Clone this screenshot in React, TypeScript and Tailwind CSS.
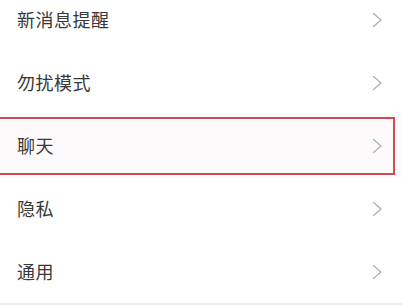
const ITEMS = ['新消息提醒', '勿扰模式', '聊天', '隐私', '通用']

function Chevron() {
  return (
    <svg width="11" height="16" viewBox="0 0 11 16" fill="none" className="text-[#b0b0b0]">
      <path d="M1.5 1.5 L9 8 L1.5 14.5" stroke="currentColor" strokeWidth="1.3" strokeLinecap="round" strokeLinejoin="round" />
    </svg>
  )
}

function Row({ label, highlight }: { label: string; highlight?: boolean }) {
  return (
    <div className={`relative flex h-[63px] items-center justify-between pl-[17px] pr-[19px] ${highlight ? 'bg-[#fcfafa]' : 'bg-white'}`}>
      <span className="text-[18px] tracking-[0.5px] text-[#383838]">{label}</span>
      <Chevron />
      {highlight && (
        // red annotation box drawn over the row
        <div className="pointer-events-none absolute left-[-3px] top-[3px] h-[58px] w-[398px] border-[2.5px] border-[#cf4b57]" />
      )}
    </div>
  )
}

export default function App() {
  return (
    <div className="h-[305px] w-[402px] overflow-hidden bg-[#ededed] font-['Noto_Sans_CJK_SC','Noto_Sans',sans-serif]">
      <div className="-mt-[12px] bg-white">
        {ITEMS.map((label, i) => (
          <Row key={label} label={label} highlight={i === 2} />
        ))}
      </div>
    </div>
  )
}
